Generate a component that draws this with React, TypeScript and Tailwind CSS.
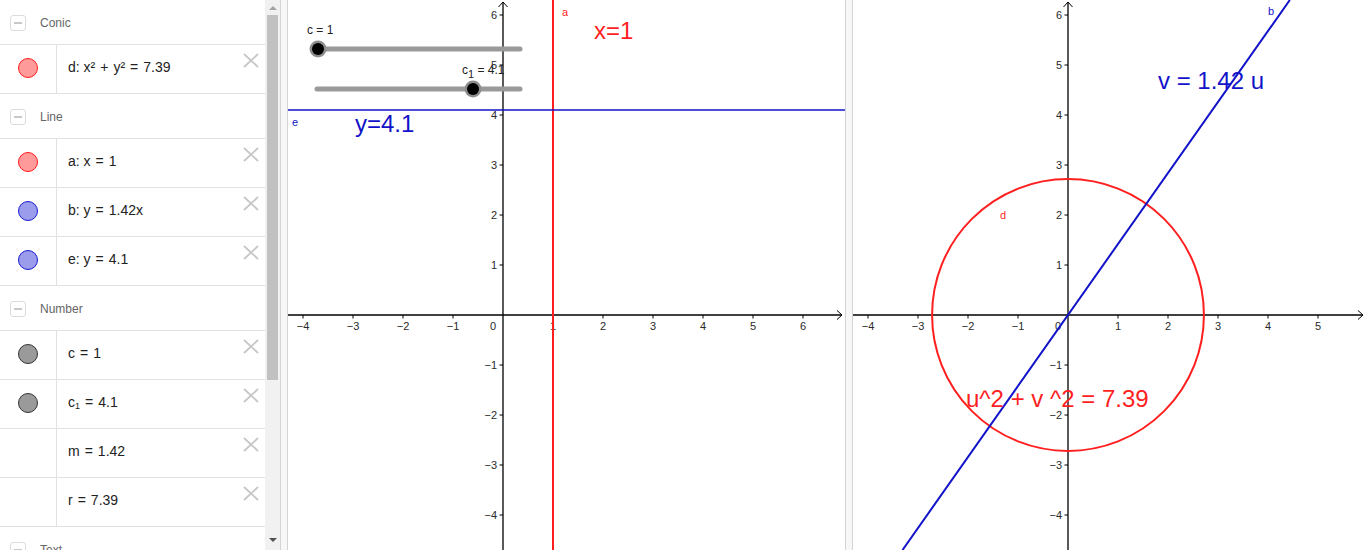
import React from 'react';

const UNIT = 50;
const H = 550;

type Dot = 'red' | 'blue' | 'gray' | null;

const dotClass: Record<string, string> = {
  red: 'bg-[#ff9a9a] border-[#ff1a1a]',
  blue: 'bg-[#9c9ced] border-[#1a1ad0]',
  gray: 'bg-[#9a9a9a] border-[#333333]',
};

const MinusBox = () => (
  <span className="flex h-[16px] w-[16px] items-center justify-center rounded-[3px] border border-[#dcdcdc]">
    <span className="h-[1.5px] w-[8px] bg-[#c8c8c8]" />
  </span>
);

const CloseX = () => (
  <svg className="absolute right-[6px] top-[8px]" width="16" height="15" viewBox="0 0 16 15">
    <path d="M1 1 L15 14 M15 1 L1 14" stroke="#c6c6c6" strokeWidth="1.8" fill="none" />
  </svg>
);

// math operator with a bit of extra room, like the algebra view renders it
const Op = ({ children }: { children: React.ReactNode }) => <span className="mx-[5px]">{children}</span>;

const Header = ({ title }: { title: string }) => (
  <div className="flex h-[45px] items-center border-b border-[#e2e2e2] pt-[2px]">
    <span className="ml-[10px]"><MinusBox /></span>
    <span className="ml-[14px] text-[12px] text-[#666]">{title}</span>
  </div>
);

const Row = ({ dot, children }: { dot: Dot; children: React.ReactNode }) => (
  <div className="relative flex h-[49px] border-b border-[#e2e2e2]">
    <div className="flex w-[57px] shrink-0 items-center justify-center border-r border-[#e2e2e2] pb-[2px]">
      {dot && <span className={`h-[20px] w-[20px] rounded-full border ${dotClass[dot]}`} />}
    </div>
    <div className="flex items-center whitespace-pre pb-[3px] pl-[11px] text-[14px] text-[#222]">{children}</div>
    <CloseX />
  </div>
);

const AlgebraView = () => (
  <div className="h-[550px] w-[265px] shrink-0 overflow-hidden bg-white">
    <Header title="Conic" />
    <Row dot="red">d: x²<Op>+</Op>y²<Op>=</Op>7.39</Row>
    <Header title="Line" />
    <Row dot="red">a: x<Op>=</Op>1</Row>
    <Row dot="blue">b: y<Op>=</Op>1.42x</Row>
    <Row dot="blue">e: y<Op>=</Op>4.1</Row>
    <Header title="Number" />
    <Row dot="gray">c<Op>=</Op>1</Row>
    <Row dot="gray">
      <span>c<sub className="text-[9px]">1</sub><Op>=</Op>4.1</span>
    </Row>
    <Row dot={null}>m<Op>=</Op>1.42</Row>
    <Row dot={null}>r<Op>=</Op>7.39</Row>
    <Header title="Text" />
  </div>
);

const Scrollbar = () => (
  <div className="flex h-[550px] w-[15px] shrink-0 flex-col items-center bg-[#f1f1f1]">
    <div className="flex h-[15px] w-full items-center justify-center">
      <span className="h-0 w-0 border-x-[4px] border-b-[4px] border-x-transparent border-b-[#a3a3a3]" />
    </div>
    <div className="h-[365px] w-[11px] bg-[#c1c1c1]" />
    <div className="flex-1" />
    <div className="flex h-[20px] w-full items-center justify-center">
      <span className="h-0 w-0 border-x-[4px] border-t-[4px] border-x-transparent border-t-[#505050]" />
    </div>
  </div>
);

const Divider = () => (
  <div className="h-[550px] w-[8px] shrink-0 border-x border-[#d4d4d4] bg-[#f7f7f7]" />
);

const fmt = (n: number) => (n < 0 ? `\u2212${-n}` : `${n}`);

const Axes = ({ width, ox, oy, xs, ys }: { width: number; ox: number; oy: number; xs: number[]; ys: number[] }) => (
  <g fontSize="11" fill="#2a2a2a">
    <line x1={0} y1={oy} x2={width - 3} y2={oy} stroke="#000" strokeWidth={1.3} />
    <path d={`M${width - 8},${oy - 4.5} L${width - 3},${oy} L${width - 8},${oy + 4.5}`} fill="none" stroke="#000" strokeWidth={1} />
    <line x1={ox} y1={2} x2={ox} y2={H} stroke="#000" strokeWidth={1.3} />
    <path d={`M${ox - 4.5},${7} L${ox},${2} L${ox + 4.5},${7}`} fill="none" stroke="#000" strokeWidth={1} />
    {xs.map((i) => (
      <g key={`x${i}`}>
        <line x1={ox + UNIT * i} y1={oy} x2={ox + UNIT * i} y2={oy + 3.5} stroke="#000" strokeWidth={1} />
        <text x={ox + UNIT * i} y={oy + 15} textAnchor="middle">{fmt(i)}</text>
      </g>
    ))}
    {ys.map((i) => (
      <g key={`y${i}`}>
        <line x1={ox - 3.5} y1={oy - UNIT * i} x2={ox} y2={oy - UNIT * i} stroke="#000" strokeWidth={1} />
        <text x={ox - 6} y={oy - UNIT * i + 4} textAnchor="end">{fmt(i)}</text>
      </g>
    ))}
    <text x={ox - 10} y={oy + 15} textAnchor="middle">0</text>
  </g>
);

const Slider = ({ x1, x2, y, knob }: { x1: number; x2: number; y: number; knob: number }) => (
  <g>
    <line x1={x1} y1={y} x2={x2} y2={y} stroke="#9a9a9a" strokeWidth={5} strokeLinecap="round" />
    <circle cx={knob} cy={y} r={8.5} fill="#8e8e8e" />
    <circle cx={knob} cy={y} r={6} fill="#000" />
  </g>
);

const BLUE = '#1212c9';
const RED = '#ff1f1f';

const GraphicsOne = () => {
  const w = 557;
  const ox = 215;
  const oy = 315;
  return (
    <svg width={w} height={H} className="block shrink-0 bg-white" fontFamily="'Liberation Sans', Arial, sans-serif">
      <Axes width={w} ox={ox} oy={oy} xs={[-4, -3, -2, -1, 1, 2, 3, 4, 5, 6]} ys={[6, 5, 4, 3, 2, 1, -1, -2, -3, -4]} />
      <line x1={ox + UNIT} y1={0} x2={ox + UNIT} y2={H} stroke={RED} strokeWidth={2} />
      <line x1={0} y1={oy - UNIT * 4.1} x2={w} y2={oy - UNIT * 4.1} stroke={BLUE} strokeWidth={1.6} />
      <text x={ox + UNIT + 9} y={16} fontSize="11" fill={RED}>a</text>
      <text x={306} y={38.5} fontSize="24" fill={RED}>x=1</text>
      <text x={4} y={126} fontSize="11" fill={BLUE}>e</text>
      <text x={67} y={132} fontSize="24" fill={BLUE}>y=4.1</text>
      <text x={19} y={34} fontSize="12" fill="#222">c = 1</text>
      <Slider x1={30} x2={232} y={49} knob={30} />
      <text x={174} y={74} fontSize="12" fill="#222">
        c<tspan dy="4" fontSize="11">1</tspan><tspan dy="-4"> = 4.1</tspan>
      </text>
      <Slider x1={29} x2={232} y={89} knob={185} />
    </svg>
  );
};

const GraphicsTwo = () => {
  const w = 513;
  const ox = 215;
  const oy = 315;
  const m = 1.42;
  const topU = oy / UNIT / m;
  const botU = -(H - oy) / UNIT / m;
  return (
    <svg width={w} height={H} className="block shrink-0 bg-white" fontFamily="'Liberation Sans', Arial, sans-serif">
      <Axes width={w} ox={ox} oy={oy} xs={[-4, -3, -2, -1, 1, 2, 3, 4, 5]} ys={[6, 5, 4, 3, 2, 1, -1, -2, -3, -4]} />
      <circle cx={ox} cy={oy} r={UNIT * Math.sqrt(7.39)} fill="none" stroke={RED} strokeWidth={2} />
      <line x1={ox + UNIT * topU} y1={0} x2={ox + UNIT * botU} y2={H} stroke={BLUE} strokeWidth={2} />
      <text x={415} y={15} fontSize="11" fill={BLUE}>b</text>
      <text x={305} y={88.5} fontSize="24" fill={BLUE}>v = 1.42 u</text>
      <text x={147} y={219} fontSize="11" fill={RED}>d</text>
      <text x={113} y={406.5} fontSize="24" fill={RED}>u^2 + v ^2 = 7.39</text>
    </svg>
  );
};

export default function App() {
  return (
    <div className="flex h-[550px] w-[1366px] overflow-hidden bg-white font-['Liberation_Sans',Arial,sans-serif]">
      <AlgebraView />
      <Scrollbar />
      <Divider />
      <GraphicsOne />
      <Divider />
      <GraphicsTwo />
    </div>
  );
}
